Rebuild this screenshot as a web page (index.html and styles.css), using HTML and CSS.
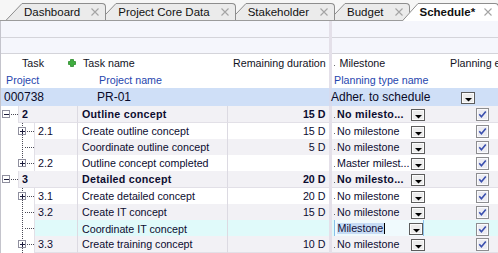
FILE: index.html
```html
<!DOCTYPE html>
<html lang="en">
<head>
<meta charset="utf-8">
<title>Schedule</title>
<link rel="stylesheet" href="styles.css">
</head>
<body>
<div class="tabbar">
  <div class="tab t1">
    <svg class="slant" width="16" height="17" viewBox="0 0 16 17"><path class="slant-fill" d="M0 17L16 0V17Z"/><path class="slant-line" d="M0.3 17L16 0.5"/></svg>
    <div class="tab-body"><span class="tab-label">Dashboard</span><svg class="tab-x" width="8" height="8" viewBox="0 0 8 8"><path d="M0.5 0.5L7.5 7.5M7.5 0.5L0.5 7.5"/></svg></div>
  </div>
  <div class="tab t2">
    <svg class="slant" width="16" height="17" viewBox="0 0 16 17"><path class="slant-fill" d="M0 17L16 0V17Z"/><path class="slant-line" d="M0.3 17L16 0.5"/></svg>
    <div class="tab-body"><span class="tab-label">Project Core Data</span><svg class="tab-x" width="8" height="8" viewBox="0 0 8 8"><path d="M0.5 0.5L7.5 7.5M7.5 0.5L0.5 7.5"/></svg></div>
  </div>
  <div class="tab t3">
    <svg class="slant" width="16" height="17" viewBox="0 0 16 17"><path class="slant-fill" d="M0 17L16 0V17Z"/><path class="slant-line" d="M0.3 17L16 0.5"/></svg>
    <div class="tab-body"><span class="tab-label">Stakeholder</span><svg class="tab-x" width="8" height="8" viewBox="0 0 8 8"><path d="M0.5 0.5L7.5 7.5M7.5 0.5L0.5 7.5"/></svg></div>
  </div>
  <div class="tab t4">
    <svg class="slant" width="16" height="17" viewBox="0 0 16 17"><path class="slant-fill" d="M0 17L16 0V17Z"/><path class="slant-line" d="M0.3 17L16 0.5"/></svg>
    <div class="tab-body"><span class="tab-label">Budget</span><svg class="tab-x" width="8" height="8" viewBox="0 0 8 8"><path d="M0.5 0.5L7.5 7.5M7.5 0.5L0.5 7.5"/></svg></div>
  </div>
  <div class="tab t5 active">
    <svg class="slant" width="16" height="18" viewBox="0 0 16 18"><path class="slant-fill" d="M0 18L16 0V18Z"/><path class="slant-line" d="M0.3 18L16 0.5"/></svg>
    <div class="tab-body"><span class="tab-label">Schedule*</span><svg class="tab-x" width="8" height="8" viewBox="0 0 8 8"><path d="M0.5 0.5L7.5 7.5M7.5 0.5L0.5 7.5"/></svg></div>
  </div>
</div>

<div class="grid">
  <div class="row blank"><div class="b-cell"></div><div class="divider"></div><div class="b-cell"></div></div>
  <div class="row blank"><div class="b-cell"></div><div class="divider"></div><div class="b-cell"></div></div>

  <div class="row head">
    <div class="h-task"><span>Task</span><svg class="plus" width="8" height="8" viewBox="0 0 8 8"><path d="M2.5 0.5h3v2h2v3h-2v2h-3v-2h-2v-3h2z"/></svg></div>
    <div class="h-name">Task name</div>
    <div class="h-dur">Remaining duration</div>
    <div class="divider"></div>
    <div class="h-ms"><i class="dot"></i><span>Milestone</span></div>
    <div class="h-plan">Planning e</div>
  </div>

  <div class="row labels">
    <div class="l-proj">Project</div>
    <div class="l-name">Project name</div>
    <div class="divider"></div>
    <div class="l-type">Planning type name</div>
  </div>

  <div class="row project">
    <div class="p-id">000738</div>
    <div class="p-name">PR-01</div>
    <div class="divider"></div>
    <div class="p-type"><span>Adher. to schedule</span><svg class="ddb" width="14" height="12" viewBox="0 0 14 12"><rect class="ddb-frame" x="0.5" y="0.5" width="13" height="11"/><rect class="ddb-in" x="1.5" y="1.5" width="11" height="9"/><path class="ddb-arrow" d="M4 6h7l-3.5 3.5z"/></svg></div>
  </div>

  <div class="row trow alt bold">
    <div class="task"><svg class="tree l1" width="17" height="17" viewBox="0 0 17 17"><rect class="tb" x="1.5" y="4.5" width="7" height="7"/><path class="ts" d="M3 8.5h5"/><path class="td" d="M10 8h1v1h-1zM12 8h1v1h-1zM14 8h1v1h-1zM16 8h1v1h-1z"/></svg><div class="num">2</div></div>
    <div class="name">Outline concept</div>
    <div class="dur">15 D</div>
    <div class="divider"></div>
    <div class="ms"><div class="combo"><i class="dot"></i><span class="ms-text">No milesto...</span><svg class="ddb" width="14" height="12" viewBox="0 0 14 12"><rect class="ddb-frame" x="0.5" y="0.5" width="13" height="11"/><rect class="ddb-in" x="1.5" y="1.5" width="11" height="9"/><path class="ddb-arrow" d="M4 6h7l-3.5 3.5z"/></svg></div></div>
    <div class="plan"><svg class="chk" width="13" height="13" viewBox="0 0 13 13"><rect class="chk-frame" x="0.5" y="0.5" width="12" height="12"/><rect class="chk-in" x="1.5" y="1.5" width="10" height="10"/><path class="chk-mark" d="M3.3 6.3L5.4 8.8L9.8 3.4"/></svg></div>
  </div>

  <div class="row trow">
    <div class="task"><svg class="tree l2" width="33" height="17" viewBox="0 0 33 17"><path class="td" d="M21 0h1v1h-1zM21 2h1v1h-1zM21 4h1v1h-1zM21 12h1v1h-1zM21 14h1v1h-1zM21 16h1v1h-1zM26 8h1v1h-1zM28 8h1v1h-1zM30 8h1v1h-1zM32 8h1v1h-1z"/><rect class="tb" x="17.5" y="4.5" width="7" height="7"/><path class="ts" d="M19 8.5h5M21.5 6v5"/></svg><div class="num">2.1</div></div>
    <div class="name">Create outline concept</div>
    <div class="dur">15 D</div>
    <div class="divider"></div>
    <div class="ms"><div class="combo"><i class="dot"></i><span class="ms-text">No milestone</span><svg class="ddb" width="14" height="12" viewBox="0 0 14 12"><rect class="ddb-frame" x="0.5" y="0.5" width="13" height="11"/><rect class="ddb-in" x="1.5" y="1.5" width="11" height="9"/><path class="ddb-arrow" d="M4 6h7l-3.5 3.5z"/></svg></div></div>
    <div class="plan"><svg class="chk" width="13" height="13" viewBox="0 0 13 13"><rect class="chk-frame" x="0.5" y="0.5" width="12" height="12"/><rect class="chk-in" x="1.5" y="1.5" width="10" height="10"/><path class="chk-mark" d="M3.3 6.3L5.4 8.8L9.8 3.4"/></svg></div>
  </div>

  <div class="row trow alt">
    <div class="task"><svg class="tree l2" width="33" height="17" viewBox="0 0 33 17"><path class="td" d="M21 0h1v1h-1zM21 2h1v1h-1zM21 4h1v1h-1zM21 6h1v1h-1zM21 8h1v1h-1zM21 10h1v1h-1zM21 12h1v1h-1zM21 14h1v1h-1zM21 16h1v1h-1zM24 8h1v1h-1zM26 8h1v1h-1zM28 8h1v1h-1zM30 8h1v1h-1zM32 8h1v1h-1z"/></svg><div class="num"></div></div>
    <div class="name">Coordinate outline concept</div>
    <div class="dur">5 D</div>
    <div class="divider"></div>
    <div class="ms"><div class="combo"><i class="dot"></i><span class="ms-text">No milestone</span><svg class="ddb" width="14" height="12" viewBox="0 0 14 12"><rect class="ddb-frame" x="0.5" y="0.5" width="13" height="11"/><rect class="ddb-in" x="1.5" y="1.5" width="11" height="9"/><path class="ddb-arrow" d="M4 6h7l-3.5 3.5z"/></svg></div></div>
    <div class="plan"><svg class="chk" width="13" height="13" viewBox="0 0 13 13"><rect class="chk-frame" x="0.5" y="0.5" width="12" height="12"/><rect class="chk-in" x="1.5" y="1.5" width="10" height="10"/><path class="chk-mark" d="M3.3 6.3L5.4 8.8L9.8 3.4"/></svg></div>
  </div>

  <div class="row trow">
    <div class="task"><svg class="tree l2" width="33" height="17" viewBox="0 0 33 17"><path class="td" d="M21 0h1v1h-1zM21 2h1v1h-1zM21 4h1v1h-1zM26 8h1v1h-1zM28 8h1v1h-1zM30 8h1v1h-1zM32 8h1v1h-1z"/><rect class="tb" x="17.5" y="4.5" width="7" height="7"/><path class="ts" d="M19 8.5h5M21.5 6v5"/></svg><div class="num">2.2</div></div>
    <div class="name">Outline concept completed</div>
    <div class="dur"></div>
    <div class="divider"></div>
    <div class="ms"><div class="combo"><i class="dot"></i><span class="ms-text">Master milest...</span><svg class="ddb" width="14" height="12" viewBox="0 0 14 12"><rect class="ddb-frame" x="0.5" y="0.5" width="13" height="11"/><rect class="ddb-in" x="1.5" y="1.5" width="11" height="9"/><path class="ddb-arrow" d="M4 6h7l-3.5 3.5z"/></svg></div></div>
    <div class="plan"><svg class="chk" width="13" height="13" viewBox="0 0 13 13"><rect class="chk-frame" x="0.5" y="0.5" width="12" height="12"/><rect class="chk-in" x="1.5" y="1.5" width="10" height="10"/><path class="chk-mark" d="M3.3 6.3L5.4 8.8L9.8 3.4"/></svg></div>
  </div>

  <div class="row trow alt bold">
    <div class="task"><svg class="tree l1" width="17" height="17" viewBox="0 0 17 17"><rect class="tb" x="1.5" y="4.5" width="7" height="7"/><path class="ts" d="M3 8.5h5"/><path class="td" d="M10 8h1v1h-1zM12 8h1v1h-1zM14 8h1v1h-1zM16 8h1v1h-1z"/></svg><div class="num">3</div></div>
    <div class="name">Detailed concept</div>
    <div class="dur">20 D</div>
    <div class="divider"></div>
    <div class="ms"><div class="combo"><i class="dot"></i><span class="ms-text">No milesto...</span><svg class="ddb" width="14" height="12" viewBox="0 0 14 12"><rect class="ddb-frame" x="0.5" y="0.5" width="13" height="11"/><rect class="ddb-in" x="1.5" y="1.5" width="11" height="9"/><path class="ddb-arrow" d="M4 6h7l-3.5 3.5z"/></svg></div></div>
    <div class="plan"><svg class="chk" width="13" height="13" viewBox="0 0 13 13"><rect class="chk-frame" x="0.5" y="0.5" width="12" height="12"/><rect class="chk-in" x="1.5" y="1.5" width="10" height="10"/><path class="chk-mark" d="M3.3 6.3L5.4 8.8L9.8 3.4"/></svg></div>
  </div>

  <div class="row trow">
    <div class="task"><svg class="tree l2" width="33" height="17" viewBox="0 0 33 17"><path class="td" d="M21 0h1v1h-1zM21 2h1v1h-1zM21 4h1v1h-1zM21 12h1v1h-1zM21 14h1v1h-1zM21 16h1v1h-1zM26 8h1v1h-1zM28 8h1v1h-1zM30 8h1v1h-1zM32 8h1v1h-1z"/><rect class="tb" x="17.5" y="4.5" width="7" height="7"/><path class="ts" d="M19 8.5h5M21.5 6v5"/></svg><div class="num">3.1</div></div>
    <div class="name">Create detailed concept</div>
    <div class="dur">20 D</div>
    <div class="divider"></div>
    <div class="ms"><div class="combo"><i class="dot"></i><span class="ms-text">No milestone</span><svg class="ddb" width="14" height="12" viewBox="0 0 14 12"><rect class="ddb-frame" x="0.5" y="0.5" width="13" height="11"/><rect class="ddb-in" x="1.5" y="1.5" width="11" height="9"/><path class="ddb-arrow" d="M4 6h7l-3.5 3.5z"/></svg></div></div>
    <div class="plan"><svg class="chk" width="13" height="13" viewBox="0 0 13 13"><rect class="chk-frame" x="0.5" y="0.5" width="12" height="12"/><rect class="chk-in" x="1.5" y="1.5" width="10" height="10"/><path class="chk-mark" d="M3.3 6.3L5.4 8.8L9.8 3.4"/></svg></div>
  </div>

  <div class="row trow alt">
    <div class="task"><svg class="tree l2" width="33" height="17" viewBox="0 0 33 17"><path class="td" d="M21 0h1v1h-1zM21 2h1v1h-1zM21 4h1v1h-1zM21 6h1v1h-1zM21 8h1v1h-1zM21 10h1v1h-1zM21 12h1v1h-1zM21 14h1v1h-1zM21 16h1v1h-1zM24 8h1v1h-1zM26 8h1v1h-1zM28 8h1v1h-1zM30 8h1v1h-1zM32 8h1v1h-1z"/></svg><div class="num">3.2</div></div>
    <div class="name">Create IT concept</div>
    <div class="dur">15 D</div>
    <div class="divider"></div>
    <div class="ms"><div class="combo"><i class="dot"></i><span class="ms-text">No milestone</span><svg class="ddb" width="14" height="12" viewBox="0 0 14 12"><rect class="ddb-frame" x="0.5" y="0.5" width="13" height="11"/><rect class="ddb-in" x="1.5" y="1.5" width="11" height="9"/><path class="ddb-arrow" d="M4 6h7l-3.5 3.5z"/></svg></div></div>
    <div class="plan"><svg class="chk" width="13" height="13" viewBox="0 0 13 13"><rect class="chk-frame" x="0.5" y="0.5" width="12" height="12"/><rect class="chk-in" x="1.5" y="1.5" width="10" height="10"/><path class="chk-mark" d="M3.3 6.3L5.4 8.8L9.8 3.4"/></svg></div>
  </div>

  <div class="row trow current">
    <div class="task"><svg class="tree l2" width="33" height="17" viewBox="0 0 33 17"><path class="td" d="M21 0h1v1h-1zM21 2h1v1h-1zM21 4h1v1h-1zM21 6h1v1h-1zM21 8h1v1h-1zM21 10h1v1h-1zM21 12h1v1h-1zM21 14h1v1h-1zM21 16h1v1h-1zM24 8h1v1h-1zM26 8h1v1h-1zM28 8h1v1h-1zM30 8h1v1h-1zM32 8h1v1h-1z"/></svg><div class="num"></div></div>
    <div class="name">Coordinate IT concept</div>
    <div class="dur"></div>
    <div class="divider"></div>
    <div class="ms"><div class="combo editing"><span class="ms-text"><span class="sel">Milestone</span><i class="caret"></i></span><svg class="ddb" width="14" height="12" viewBox="0 0 14 12"><rect class="ddb-frame" x="0.5" y="0.5" width="13" height="11"/><rect class="ddb-in" x="1.5" y="1.5" width="11" height="9"/><path class="ddb-arrow" d="M4 6h7l-3.5 3.5z"/></svg></div></div>
    <div class="plan"><svg class="chk" width="13" height="13" viewBox="0 0 13 13"><rect class="chk-frame" x="0.5" y="0.5" width="12" height="12"/><rect class="chk-in" x="1.5" y="1.5" width="10" height="10"/><path class="chk-mark" d="M3.3 6.3L5.4 8.8L9.8 3.4"/></svg></div>
  </div>

  <div class="row trow alt">
    <div class="task"><svg class="tree l2" width="33" height="17" viewBox="0 0 33 17"><path class="td" d="M21 0h1v1h-1zM21 2h1v1h-1zM21 4h1v1h-1zM21 12h1v1h-1zM21 14h1v1h-1zM21 16h1v1h-1zM26 8h1v1h-1zM28 8h1v1h-1zM30 8h1v1h-1zM32 8h1v1h-1z"/><rect class="tb" x="17.5" y="4.5" width="7" height="7"/><path class="ts" d="M19 8.5h5M21.5 6v5"/></svg><div class="num">3.3</div></div>
    <div class="name">Create training concept</div>
    <div class="dur">10 D</div>
    <div class="divider"></div>
    <div class="ms"><div class="combo"><i class="dot"></i><span class="ms-text">No milestone</span><svg class="ddb" width="14" height="12" viewBox="0 0 14 12"><rect class="ddb-frame" x="0.5" y="0.5" width="13" height="11"/><rect class="ddb-in" x="1.5" y="1.5" width="11" height="9"/><path class="ddb-arrow" d="M4 6h7l-3.5 3.5z"/></svg></div></div>
    <div class="plan"><svg class="chk" width="13" height="13" viewBox="0 0 13 13"><rect class="chk-frame" x="0.5" y="0.5" width="12" height="12"/><rect class="chk-in" x="1.5" y="1.5" width="10" height="10"/><path class="chk-mark" d="M3.3 6.3L5.4 8.8L9.8 3.4"/></svg></div>
  </div>
</div>
</body>
</html>
```

FILE: styles.css
```css
* { box-sizing: border-box; }
html, body { margin: 0; padding: 0; }
body {
  width: 498px;
  height: 253px;
  overflow: hidden;
  background: #fff;
  font-family: "Liberation Sans", Arial, sans-serif;
  font-size: 10.7px;
  color: #0c0c30;
}

/* ---------- tabs ---------- */
.tabbar {
  height: 21px;
  display: flex;
  align-items: flex-end;
  padding-left: 6px;
  background: #f6f6f6;
  border-bottom: 1px solid #9b9b9b;
  font-size: 11.5px;
  color: #111;
}
.tab { display: flex; height: 17px; position: relative; flex: none; }
.tab + .tab { margin-left: -6px; }
.t1 { z-index: 5; }
.t2 { z-index: 4; }
.t3 { z-index: 3; }
.t4 { z-index: 2; }
.tab.active { z-index: 6; height: 18px; margin-bottom: -1px; margin-left: -8px; }
.slant { display: block; flex: none; }
.slant-fill { fill: #ebebeb; }
.slant-line { stroke: #8d8d8d; stroke-width: 1; fill: none; }
.active .slant-fill { fill: #fff; }
.tab-body {
  display: flex;
  align-items: center;
  gap: 11px;
  padding: 0 6px 0 2px;
  background: #ebebeb;
  border-top: 1px solid #8d8d8d;
  border-right: 1px solid #8d8d8d;
  border-top-right-radius: 4px;
}
.active .tab-body { background: #fff; font-weight: bold; padding-bottom: 1px; gap: 9px; }
.tab-label { white-space: nowrap; }
.tab-x { display: block; flex: none; }
.tab-x path { stroke: #a4a4a4; stroke-width: 1.1; fill: none; }

/* ---------- grid ---------- */
.grid { border-left: 1px solid #c4c4cc; }
.row {
  display: grid;
  grid-template-columns: 77px 150px 100.5px 3px 116px 1fr;
  height: 16.25px;
  overflow: hidden;
  white-space: nowrap;
}
.divider { background: #e4e0e9; }

.blank {
  height: 16.5px;
  grid-template-columns: 327.5px 3px 1fr;
}
.b-cell { background: #f5f6fc; border-bottom: 1px solid #d4d4da; }

.head { height: 17px; align-items: stretch; color: #12121e; }
.head > div:not(.divider) { display: flex; align-items: center; }
.h-task { padding-left: 21px; }
.h-task span { flex: 1; }
.plus { display: block; margin-right: 2px; }
.plus path { fill: #3fae3f; stroke: #2b8a2b; stroke-width: 0.8; }
.h-name { padding-left: 5px; }
.h-dur { padding-left: 5px; }
.h-ms { padding-left: 2px; }
.h-ms span { margin-left: 5px; }
.h-plan { padding-left: 2.5px; }

.labels {
  height: 17px;
  grid-template-columns: 92px 235.5px 3px 1fr;
  color: #2646ae;
  align-items: center;
}
.labels .divider { align-self: stretch; }
.l-proj { padding-left: 5px; }
.l-name { padding-left: 6px; }
.l-type { padding-left: 2.5px; }

.project {
  height: 18.25px;
  grid-template-columns: 92px 235.5px 3px 1fr;
  background: #cfdff7;
  font-size: 12px;
  color: #0a0a28;
}
.project > div:not(.divider) { display: flex; align-items: center; }
.project .divider { background: #d6dbef; }
.p-id { padding-left: 3px; }
.p-name { padding-left: 4px; }
.p-type { padding-right: 23px; }
.p-type span { flex: 1; margin-left: -0.5px; }

/* task rows */
.trow > div:not(.divider):not(.task) { border-bottom: 1px solid #e2e0e7; display: flex; align-items: center; }
.task { display: flex; }
.tree { display: block; flex: none; }
.tb { fill: #fff; stroke: #8f8f9e; stroke-width: 1; }
.ts { stroke: #1c1c3c; stroke-width: 1; fill: none; }
.td { fill: #4a4a56; }
.num {
  flex: 1;
  display: flex;
  align-items: center;
  padding-left: 3px;
  border-left: 1px solid #e2e0e7;
  border-right: 1px solid #dcdae2;
  border-bottom: 1px solid #e2e0e7;
}
.name { padding-left: 4px; border-right: 1px solid #dcdae2; }
.dur { justify-content: flex-end; padding-right: 3px; }
.alt .num, .alt .name, .alt .dur, .alt .ms, .alt .plan { background: #f2f1f5; }
.current .num, .current .name, .current .dur, .current .ms, .current .plan { background: #e0fafa; }
.bold { font-weight: bold; }
.bold .name, .bold .num, .bold .ms-text { letter-spacing: 0.25px; }

.ms { padding-left: 2.5px; overflow: visible !important; }
.combo {
  width: 90.5px;
  height: 100%;
  display: flex;
  align-items: center;
}
.dot { display: block; width: 1px; height: 1px; background: #6a6a70; margin-top: 6px; flex: none; }
.ms-text { flex: 1; margin-left: 2px; overflow: hidden; display: flex; align-items: center; }
.ddb { display: block; flex: none; margin-top: 2px; }
.ddb-frame { fill: #e6e6e6; stroke: #5c5c5c; }
.ddb-in { fill: #ececec; stroke: #fbfbfb; }
.ddb-arrow { fill: #000; }
.combo.editing {
  height: 18px;
  margin-top: -1px;
  margin-left: -0.5px;
  border: 1px solid #8ac0ea;
  background: #f0fafd;
}
.editing .ms-text { margin-left: 2px; }
.sel { background: #c7dcf5; color: #10103a; padding: 0 1px; line-height: 11px; }
.caret { display: block; width: 1px; height: 11px; background: #000; }

.plan { padding-left: 28.5px; }
.chk { display: block; margin-top: 1px; }
.chk-frame { fill: #e4e4ea; stroke: #8d8d90; }
.chk-in { fill: #ececf2; stroke: #fbfbfd; }
.chk-mark { fill: none; stroke: #3a4fae; stroke-width: 1.6; }
```
